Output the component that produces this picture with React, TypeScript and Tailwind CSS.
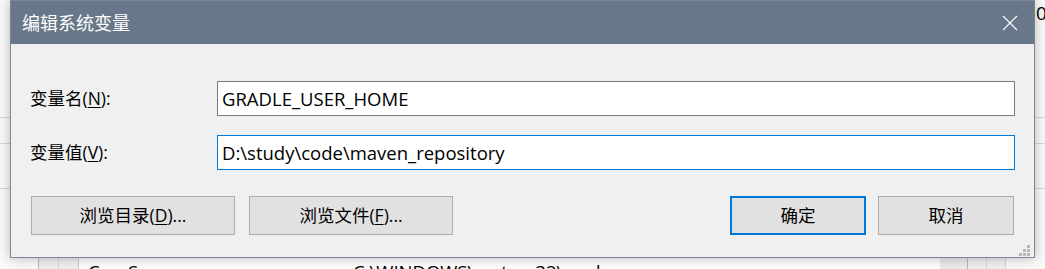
import React from "react";

const FONT = "font-['Open_Sans','Noto_Sans_CJK_SC',sans-serif]";

function Btn({ children, primary, w }: { children: React.ReactNode; primary?: boolean; w: string }) {
  return (
    <button
      className={`${w} h-[39px] bg-[#e1e1e1] text-[17.5px] leading-none text-black flex items-center justify-center ${
        primary ? "border-2 border-[#0078d7]" : "border border-[#adadad]"
      }`}
    >
      {children}
    </button>
  );
}

export default function App() {
  return (
    <div className={`relative w-[1045px] h-[269px] overflow-hidden bg-[#fafafa] ${FONT}`}>
      {/* background window */}
      <div className="flex flex-col w-full h-full">
        <div className="h-[117px] flex justify-end">
          <span className="mt-[2px] mr-[-3px] w-[12px] text-[19px] leading-[22px] text-black">0</span>
        </div>
        <div className="h-px bg-[#d9d9d9]" />
        <div className="h-[25px]" />
        <div className="h-px bg-[#d9d9d9]" />
        <div className="h-[44px]" />
        <div className="h-px bg-[#d9d9d9]" />
        <div className="h-[62px]" />
        <div className="flex h-[18px] bg-white">
          <div className="w-[38px] bg-[#fafafa]" />
          <div className="w-[20px] border-l border-[#b9b9b9] bg-[#f0f0f0]" />
          <div className="w-[20px] border-l border-[#d9d9d9] bg-[#f0f0f0]" />
          <div className="w-[862px] border-l border-[#c9c9c9] pl-[9px] pt-[10px] flex text-[18.5px] leading-[22px] text-black">
            <span className="w-[265px]">ComSpec</span>
            <span>C:\WINDOWS\system32\cmd.exe</span>
          </div>
          <div className="w-[27px] bg-[#ececec]" />
          <div className="w-[19px] border-l border-[#b9b9b9] bg-[#f0f0f0]" />
          <div className="w-[19px] border-l border-[#d9d9d9] bg-[#f0f0f0]" />
          <div className="flex-1 border-l border-[#d9d9d9] bg-[#fafafa]" />
        </div>
      </div>

      {/* dialog */}
      <div className="absolute left-[10px] top-0 w-[1025px] h-[258px] border border-[#7a879a] bg-[#f0f0f0] flex flex-col shadow-[0_0_12px_rgba(0,0,0,0.28)]">
        <div className="h-[43px] bg-[#687789] flex items-center justify-between pl-[11px] pr-[16px]">
          <span className="text-[18px] leading-none text-white font-['Noto_Sans_CJK_SC',sans-serif] pb-[1px]">编辑系统变量</span>
          <svg width="16" height="16" viewBox="0 0 16 16">
            <path d="M1 1 L15 15 M15 1 L1 15" stroke="#ffffff" strokeWidth="1.1" fill="none" />
          </svg>
        </div>

        <div className="flex flex-col pt-[37px] px-[19px]">
          <div className="flex items-center h-[35px]">
            <span className="w-[187px] text-[17.5px] text-black leading-none">
              变量名(<span className="underline underline-offset-2">N</span>):
            </span>
            <div className="flex-1 h-[35px] bg-white border border-[#7a7a7a] flex items-center pl-[4px] text-[18.5px] text-black">
              GRADLE_USER_HOME
            </div>
          </div>
          <div className="flex items-center h-[35px] mt-[19px]">
            <span className="w-[187px] text-[17.5px] text-black leading-none">
              变量值(<span className="underline underline-offset-2">V</span>):
            </span>
            <div className="flex-1 h-[35px] bg-white border border-[#0078d7] flex items-center pl-[4px] text-[18.5px] text-black">
              D:\study\code\maven_repository
            </div>
          </div>

          <div className="flex items-center mt-[26px] mx-px">
            <Btn w="w-[204px]">
              浏览目录(<span className="underline underline-offset-2">D</span>)...
            </Btn>
            <div className="ml-[14px]">
              <Btn w="w-[204px]">
                浏览文件(<span className="underline underline-offset-2">F</span>)...
              </Btn>
            </div>
            <div className="flex-1" />
            <Btn w="w-[136px]" primary>
              确定
            </Btn>
            <div className="ml-[12px]">
              <Btn w="w-[136px]">取消</Btn>
            </div>
          </div>
        </div>

        {/* resize grip */}
        <div className="absolute right-[4px] bottom-[1px] grid grid-cols-3 gap-px w-[11px] h-[11px]">
          <span />
          <span />
          <span className="bg-[#b8b8b8]" />
          <span />
          <span className="bg-[#b8b8b8]" />
          <span className="bg-[#b8b8b8]" />
          <span className="bg-[#b8b8b8]" />
          <span className="bg-[#b8b8b8]" />
          <span className="bg-[#b8b8b8]" />
        </div>
      </div>
    </div>
  );
}
